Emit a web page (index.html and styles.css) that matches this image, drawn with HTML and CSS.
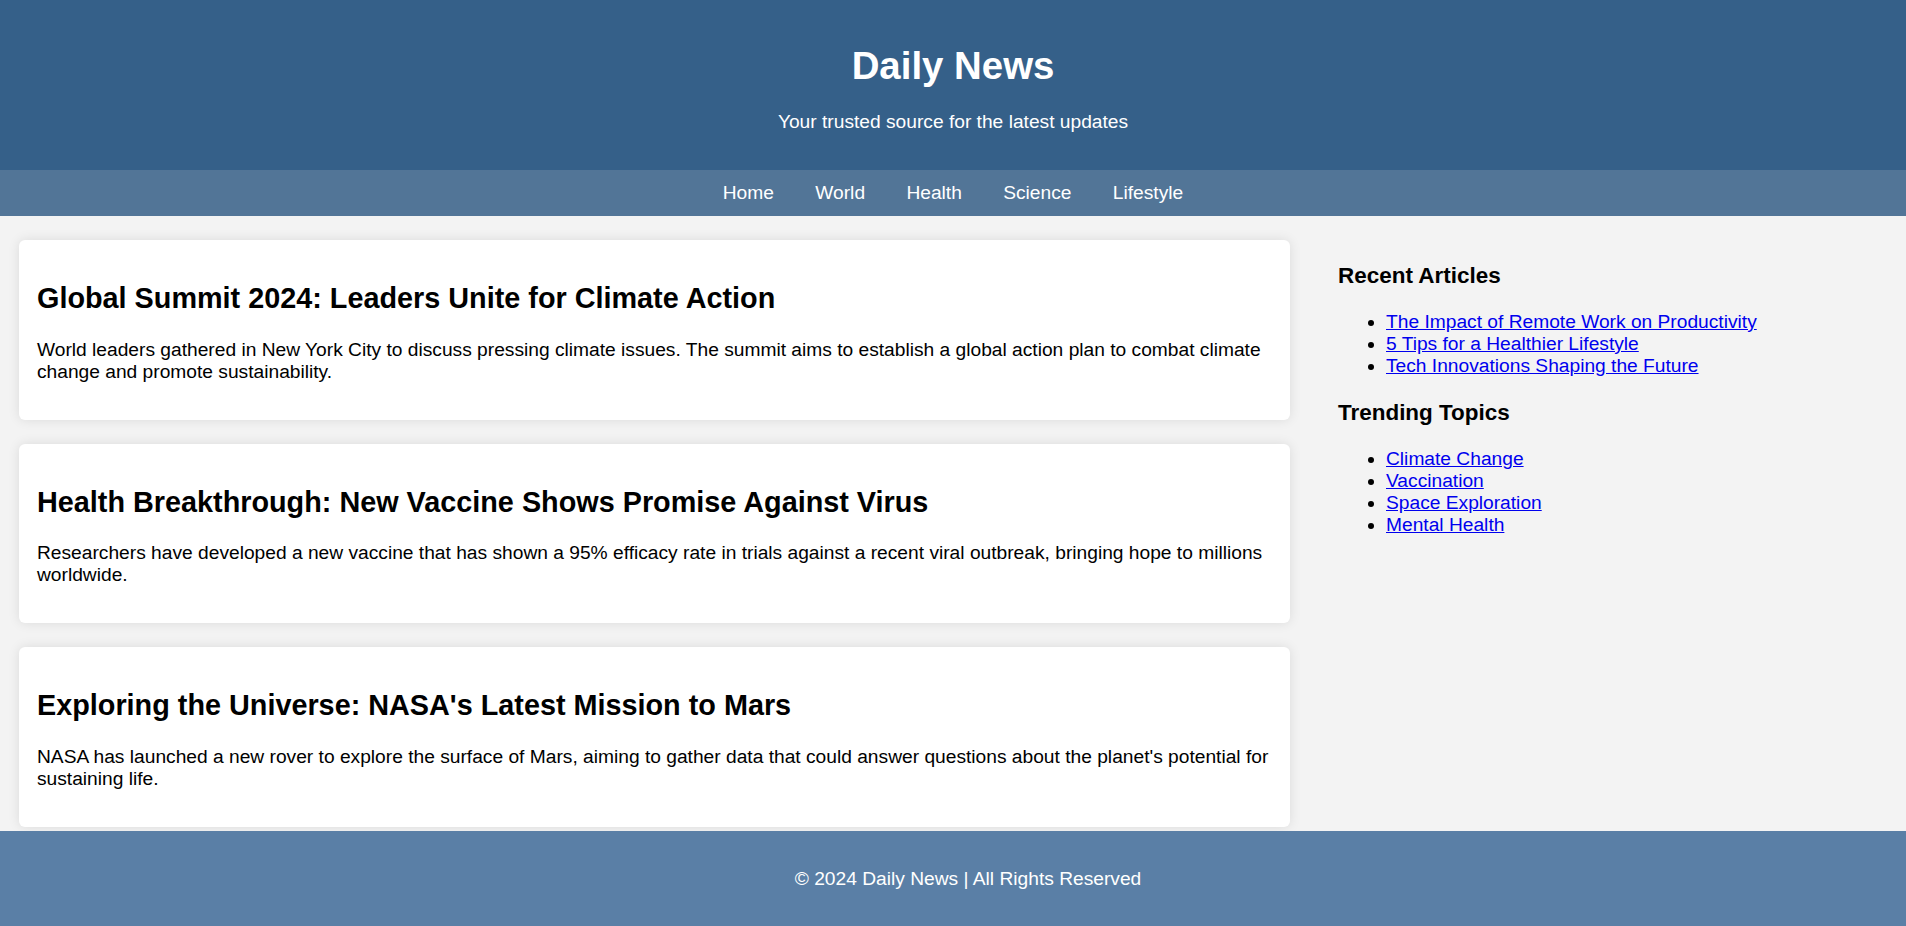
FILE: index.html
```html
<!DOCTYPE html>
<html lang="en">
<head>
<meta charset="utf-8">
<title>Daily News</title>
<link rel="stylesheet" href="styles.css">
</head>
<body>
<header class="site-header">
  <h1 class="site-title">Daily News</h1>
  <p class="site-tagline">Your trusted source for the latest updates</p>
</header>
<nav class="site-nav">
  <a href="#">Home</a>
  <a href="#">World</a>
  <a href="#">Health</a>
  <a href="#">Science</a>
  <a href="#">Lifestyle</a>
</nav>
<div class="layout">
  <main class="articles">
    <article class="card">
      <h2 class="card-title">Global Summit 2024: Leaders Unite for Climate Action</h2>
      <p class="card-text">World leaders gathered in New York City to discuss pressing climate issues. The summit aims to establish a global action plan to combat climate change and promote sustainability.</p>
    </article>
    <article class="card">
      <h2 class="card-title">Health Breakthrough: New Vaccine Shows Promise Against Virus</h2>
      <p class="card-text">Researchers have developed a new vaccine that has shown a 95% efficacy rate in trials against a recent viral outbreak, bringing hope to millions worldwide.</p>
    </article>
    <article class="card">
      <h2 class="card-title">Exploring the Universe: NASA's Latest Mission to Mars</h2>
      <p class="card-text">NASA has launched a new rover to explore the surface of Mars, aiming to gather data that could answer questions about the planet's potential for sustaining life.</p>
    </article>
  </main>
  <aside class="sidebar">
    <h3 class="sidebar-title">Recent Articles</h3>
    <ul class="sidebar-list">
      <li><a href="#">The Impact of Remote Work on Productivity</a></li>
      <li><a href="#">5 Tips for a Healthier Lifestyle</a></li>
      <li><a href="#">Tech Innovations Shaping the Future</a></li>
    </ul>
    <h3 class="sidebar-title">Trending Topics</h3>
    <ul class="sidebar-list">
      <li><a href="#">Climate Change</a></li>
      <li><a href="#">Vaccination</a></li>
      <li><a href="#">Space Exploration</a></li>
      <li><a href="#">Mental Health</a></li>
    </ul>
  </aside>
</div>
<footer class="site-footer">
  <p class="footer-text">&copy; 2024 Daily News | All Rights Reserved</p>
</footer>
</body>
</html>
```
FILE: styles.css
```css
html, body {
  margin: 0;
  padding: 0;
}

body {
  font-family: "Liberation Sans", Arial, sans-serif;
  font-size: 19.2px;
  line-height: 22px;
  color: #000;
  background: #f3f3f3;
}

.site-header {
  background: #356089;
  color: #fff;
  text-align: center;
  padding: 18px 0;
}

.site-title {
  font-size: 38.4px;
  line-height: 44px;
  font-weight: bold;
  margin: 26px 0 23px;
}

.site-tagline {
  margin: 0 0 19px;
}

.site-nav {
  background: #527597;
  text-align: center;
  padding: 12px 0;
}

.site-nav a {
  color: #fff;
  text-decoration: none;
  margin: 0 18px;
}

.layout {
  display: grid;
  grid-template-columns: 1271px 1fr;
  column-gap: 48px;
  padding: 24px 19px;
}

.card {
  background: #fff;
  border-radius: 6px;
  box-shadow: 0 0 12px rgba(0, 0, 0, 0.1);
  padding: 18px;
  margin-bottom: 24px;
}

.card-title {
  font-size: 28.8px;
  line-height: 33px;
  font-weight: bold;
  margin: 24px 0 23.5px;
}

.card-text {
  margin: 19.2px 0;
}

.sidebar-title {
  font-size: 22.46px;
  line-height: 26px;
  font-weight: bold;
  margin: 22.5px 0;
}

.sidebar-list {
  margin: 19.2px 0;
  padding-left: 48px;
}

.sidebar-list a {
  color: #0000ee;
  text-decoration: underline;
}

.site-footer {
  position: fixed;
  left: 0;
  right: 0;
  bottom: 0;
  background: #5a7fa6;
  color: #fff;
  text-align: center;
  padding: 18px 0 18px 30px;
}

.footer-text {
  margin: 18.5px 0;
}
```
